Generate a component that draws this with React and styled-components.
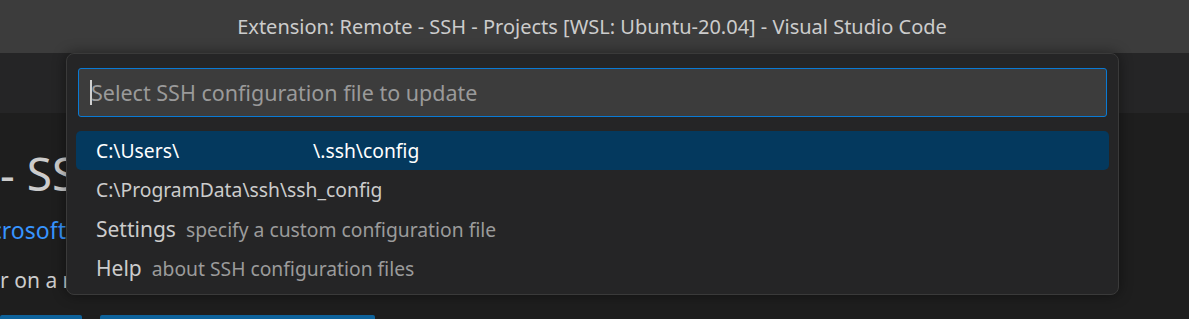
import React from 'react';
import styled, { createGlobalStyle } from 'styled-components';

const GlobalStyle = createGlobalStyle`
  html, body {
    margin: 0;
    padding: 0;
    background: #1e1e1e;
    overflow: hidden;
  }
  body {
    font-family: "Noto Sans", "Open Sans", sans-serif;
  }
`;

const Window = styled.div`
  position: relative;
  width: 1189px;
  height: 319px;
  overflow: hidden;
  background: #1e1e1e;
  display: flex;
  flex-direction: column;
`;

const TitleBar = styled.div`
  height: 53px;
  flex-shrink: 0;
  background: #3c3c3c;
  color: #cccccc;
  font-size: 20px;
  display: flex;
  align-items: center;
  justify-content: center;
  padding-right: 5px;
`;

const TabStrip = styled.div`
  height: 60px;
  flex-shrink: 0;
  background: #252526;
`;

const Editor = styled.div`
  flex: 1;
  overflow: hidden;
  display: flex;
  flex-direction: column;
  color: #cccccc;
`;

const Heading = styled.div`
  font-size: 46px;
  white-space: nowrap;
  margin: 30px 0 0 -180px;
  line-height: 60px;
`;

const Publisher = styled.div`
  font-size: 23px;
  color: #3794ff;
  white-space: nowrap;
  margin: 12px 0 0 -36px;
  line-height: 30px;
`;

const Description = styled.div`
  font-size: 21px;
  white-space: nowrap;
  margin: 20px 0 0 -50px;
  line-height: 30px;
`;

const Buttons = styled.div`
  display: flex;
  gap: 18px;
  margin-top: 20px;
`;

const PageButton = styled.div`
  height: 20px;
  width: ${p => p.$w}px;
  background: #0e639c;
  border-radius: 2px;
`;

const QuickPick = styled.div`
  position: absolute;
  left: 66px;
  top: 53px;
  width: 1053px;
  box-sizing: border-box;
  background: #252526;
  border: 1px solid #3a3a3a;
  border-radius: 8px;
  box-shadow: 0 0 14px rgba(0, 0, 0, 0.45);
  padding: 14px 9px 7px 9px;
  display: flex;
  flex-direction: column;
`;

const InputBox = styled.div`
  margin: 0 2px 14px 2px;
  height: 49px;
  box-sizing: border-box;
  background: #3c3c3c;
  border: 1px solid #0a7ad4;
  border-radius: 3px;
  display: flex;
  align-items: center;
  padding-left: 11px;
  font-size: 21.5px;
  color: #9a9a9a;
`;

const Caret = styled.span`
  display: inline-block;
  width: 2px;
  height: 25px;
  background: #d0d0d0;
  margin-right: -1px;
`;

const Row = styled.div`
  height: 39px;
  display: flex;
  align-items: center;
  padding-left: 20px;
  border-radius: 5px;
  font-size: ${p => p.$size || 21}px;
  white-space: nowrap;
  background: ${p => (p.$selected ? '#04395e' : 'transparent')};
  color: ${p => (p.$selected ? '#ffffff' : '#cccccc')};
`;

const Redacted = styled.span`
  display: inline-block;
  width: ${p => p.$w}px;
`;

const Detail = styled.span`
  font-size: 19.3px;
  color: #9b9b9b;
  margin-left: 10px;
  padding-top: 2px;
`;

export default function App() {
  return (
    <>
      <GlobalStyle />
      <Window>
        <TitleBar>Extension: Remote - SSH - Projects [WSL: Ubuntu-20.04] - Visual Studio Code</TitleBar>
        <TabStrip />
        <Editor>
          <Heading>Remote - SSH</Heading>
          <Publisher>Microsoft</Publisher>
          <Description>folder on a remote machine using SSH</Description>
          <Buttons>
            <PageButton $w={82} />
            <PageButton $w={275} />
          </Buttons>
        </Editor>

        <QuickPick>
          <InputBox>
            <Caret />
            Select SSH configuration file to update
          </InputBox>
          <Row $selected $size={19.3}>
            C:\Users\<Redacted $w={134} />\.ssh\config
          </Row>
          <Row $size={19.3}>C:\ProgramData\ssh\ssh_config</Row>
          <Row>
            Settings<Detail>specify a custom configuration file</Detail>
          </Row>
          <Row>
            Help<Detail>about SSH configuration files</Detail>
          </Row>
        </QuickPick>
      </Window>
    </>
  );
}
